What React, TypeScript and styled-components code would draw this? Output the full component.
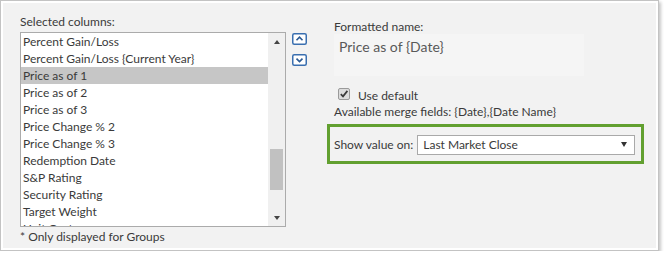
import React from "react";
import styled, { createGlobalStyle } from "styled-components";

const GlobalStyle = createGlobalStyle`
  html, body {
    margin: 0;
    padding: 0;
    background: #ffffff;
  }
  body {
    font-family: Lato, "Open Sans", sans-serif;
    font-size: 12px;
    color: #3a3a3a;
  }
`;

const columns = [
  "Percent Gain/Loss",
  "Percent Gain/Loss {Current Year}",
  "Price as of 1",
  "Price as of 2",
  "Price as of 3",
  "Price Change % 2",
  "Price Change % 3",
  "Redemption Date",
  "S&P Rating",
  "Security Rating",
  "Target Weight",
  "Unit Cost",
];

const MoveButton: React.FC<{ dir: "up" | "down"; label: string }> = ({ dir, label }) => (
  <MoveBtn aria-label={label} title={label}>
    <svg width="15" height="12" viewBox="0 0 15 12">
      <rect x="0.75" y="0.75" width="13.5" height="10.5" rx="1.5" fill="#ffffff" stroke="#3a6fb0" strokeWidth="1.5" />
      {dir === "up" ? (
        <path d="M4.5 7.2 L7.5 4.2 L10.5 7.2" fill="none" stroke="#2b5a94" strokeWidth="1.6" />
      ) : (
        <path d="M4.5 4.6 L7.5 7.6 L10.5 4.6" fill="none" stroke="#2b5a94" strokeWidth="1.6" />
      )}
    </svg>
  </MoveBtn>
);

const CheckIcon = () => (
  <svg width="12" height="12" viewBox="0 0 12 12">
    <rect x="0.5" y="0.5" width="11" height="11" rx="1.5" fill="#dcdcdc" stroke="#9a9a9a" />
    <path d="M2.8 6.2 L5 8.4 L9.4 2.9" fill="none" stroke="#3a3a3a" strokeWidth="1.7" />
  </svg>
);

const App: React.FC = () => {
  const selected = "Price as of 1";
  return (
    <>
      <GlobalStyle />
      <Frame>
        <Panel>
          <LeftColumn>
            <Label>Selected columns:</Label>
            <ListBox role="listbox">
              <Items>
                {columns.map((c) => (
                  <Item key={c} $selected={c === selected}>
                    {c}
                  </Item>
                ))}
              </Items>
              <ScrollBar>
                <ScrollArrow>
                  <Triangle $dir="up" />
                </ScrollArrow>
                <ScrollTrack>
                  <Thumb style={{ marginTop: 99 }} />
                </ScrollTrack>
                <ScrollArrow>
                  <Triangle $dir="down" />
                </ScrollArrow>
              </ScrollBar>
            </ListBox>
            <Footnote>* Only displayed for Groups</Footnote>
          </LeftColumn>

          <MoveButtons>
            <MoveButton dir="up" label="Move up" />
            <MoveButton dir="down" label="Move down" />
          </MoveButtons>

          <RightColumn>
            <FieldLabel>Formatted name:</FieldLabel>
            <NameBox>Price as of {"{Date}"}</NameBox>
            <CheckRow>
              <CheckIcon />
              <span>Use default</span>
            </CheckRow>
            <MergeFields>Available merge fields: {"{Date}"},{"{Date Name}"}</MergeFields>
            <Highlight>
              <span>Show value on:</span>
              <Select>
                <span>Last Market Close</span>
                <SelectArrow />
              </Select>
            </Highlight>
          </RightColumn>
        </Panel>
      </Frame>
    </>
  );
};

const Frame = styled.div`
  box-sizing: border-box;
  width: 659px;
  height: 251px;
  border: 1px solid #c3c3c3;
  padding: 2px;
  background: #ffffff;
  box-shadow: 2px 2px 3px rgba(0, 0, 0, 0.22);
`;

const Panel = styled.div`
  box-sizing: border-box;
  height: 100%;
  background: #f2f2f2;
  display: flex;
  align-items: flex-start;
  padding: 11px 0 0 17px;
`;

const LeftColumn = styled.div`
  display: flex;
  flex-direction: column;
  width: 266px;
`;

const Label = styled.div`
  line-height: 16px;
  margin-bottom: 2px;
`;

const ListBox = styled.div`
  box-sizing: border-box;
  height: 195px;
  border: 1px solid #ababab;
  background: #ffffff;
  display: flex;
`;

const Items = styled.div`
  flex: 1;
  overflow: hidden;
`;

const Item = styled.div<{ $selected?: boolean }>`
  height: 17px;
  line-height: 17px;
  padding-left: 2px;
  white-space: nowrap;
  background: ${(p) => (p.$selected ? "#c6c6c6" : "transparent")};
`;

const ScrollBar = styled.div`
  width: 17px;
  background: #f0f0f0;
  display: flex;
  flex-direction: column;
`;

const ScrollArrow = styled.div`
  height: 17px;
  display: flex;
  align-items: center;
  justify-content: center;
`;

const Triangle = styled.div<{ $dir: "up" | "down" }>`
  width: 0;
  height: 0;
  border-left: 3.5px solid transparent;
  border-right: 3.5px solid transparent;
  ${(p) =>
    p.$dir === "up"
      ? "border-bottom: 4px solid #444444;"
      : "border-top: 4px solid #444444;"}
`;

const ScrollTrack = styled.div`
  flex: 1;
`;

const Thumb = styled.div`
  width: 13px;
  height: 41px;
  margin-left: 2px;
  background: #c1c1c1;
`;

const Footnote = styled.div`
  line-height: 17px;
  margin-top: 1px;
`;

const MoveButtons = styled.div`
  display: flex;
  flex-direction: column;
  gap: 9px;
  margin: 19px 0 0 6px;
`;

const MoveBtn = styled.div`
  width: 15px;
  height: 12px;
  display: flex;
  cursor: pointer;
`;

const RightColumn = styled.div`
  display: flex;
  flex-direction: column;
  margin: 6px 0 0 20px;
  width: 317px;
`;

const FieldLabel = styled.div`
  margin-left: 7px;
  line-height: 14px;
`;

const NameBox = styled.div`
  box-sizing: border-box;
  margin-left: 7px;
  width: 250px;
  height: 42px;
  padding: 3px 0 0 5px;
  background: #f5f5f5;
  font-size: 14px;
  line-height: 20px;
  color: #595959;
`;

const CheckRow = styled.div`
  display: flex;
  align-items: center;
  gap: 8px;
  height: 18px;
  margin: 10px 0 0 11px;
  svg {
    margin-top: -2px;
  }
`;

const MergeFields = styled.div`
  margin-left: 7px;
  line-height: 16px;
`;

const Highlight = styled.div`
  box-sizing: border-box;
  margin-top: 4px;
  height: 40px;
  border: 3px solid #62a030;
  display: flex;
  align-items: center;
  gap: 4px;
  padding: 1px 6px 0 4px;
`;

const Select = styled.div`
  box-sizing: border-box;
  flex: 1;
  height: 20px;
  border: 1px solid #a9a9a9;
  background: #ffffff;
  display: flex;
  align-items: center;
  justify-content: space-between;
  padding: 0 7px 0 5px;
`;

const SelectArrow = styled.div`
  width: 0;
  height: 0;
  border-left: 3.5px solid transparent;
  border-right: 3.5px solid transparent;
  border-top: 5px solid #333333;
`;

export default App;
